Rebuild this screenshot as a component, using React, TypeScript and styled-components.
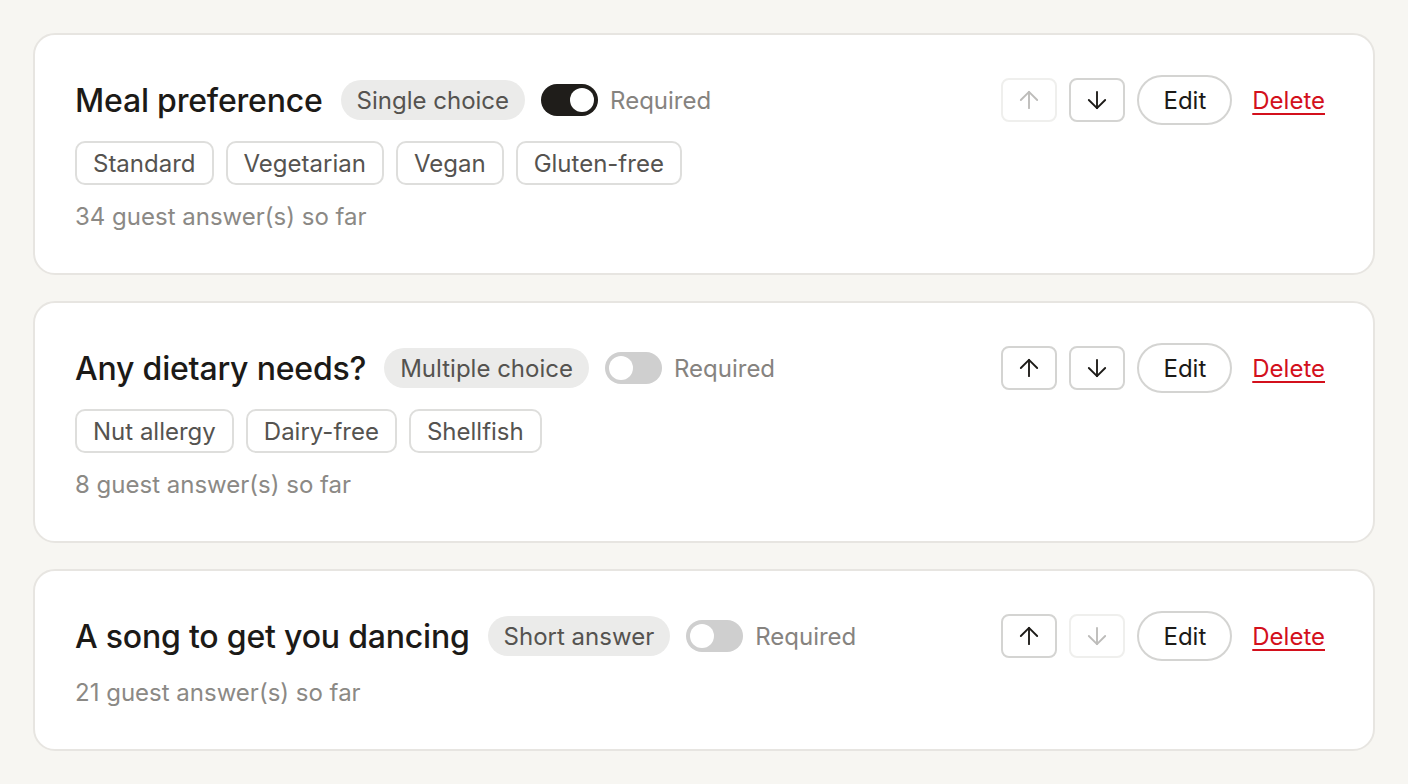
import React from "react";
import styled, { createGlobalStyle } from "styled-components";
import { ArrowUp, ArrowDown } from "lucide-react";

const Global = createGlobalStyle`
  * { box-sizing: border-box; }
  html, body { margin: 0; padding: 0; background: #f7f6f2; }
  body { font-family: Inter, "Noto Sans", sans-serif; color: #1c1a17; }
`;

const Page = styled.main`
  padding: 33px;
  display: flex;
  flex-direction: column;
  gap: 26px;
`;

const Card = styled.section`
  background: #ffffff;
  border: 2px solid #e7e5e1;
  border-radius: 22px;
  padding: 40px;
  display: flex;
  flex-direction: column;
  gap: 16px;
`;

const Header = styled.div`
  display: flex;
  align-items: center;
  justify-content: space-between;
  height: 50px;
`;

const TitleGroup = styled.div`
  display: flex;
  align-items: center;
  gap: 16px;
`;

const Title = styled.h2`
  margin: 0 2px 0 0;
  font-size: 32px;
  font-weight: 500;
  letter-spacing: -0.2px;
  color: #1c1a17;
`;

const TypeBadge = styled.span`
  display: inline-flex;
  align-items: center;
  height: 40px;
  padding: 0 16px;
  border-radius: 20px;
  background: #ebebea;
  color: #555350;
  font-size: 24px;
`;

const ToggleWrap = styled.label`
  display: flex;
  align-items: center;
  gap: 12px;
  color: #86837f;
  font-size: 24px;
`;

const Track = styled.span<{ $on: boolean }>`
  position: relative;
  width: 57px;
  height: 32px;
  border-radius: 16px;
  background: ${(p) => (p.$on ? "#1f1d1a" : "#cfcfcf")};
`;

const Knob = styled.span<{ $on: boolean }>`
  position: absolute;
  top: 4px;
  left: ${(p) => (p.$on ? "29px" : "4px")};
  width: 24px;
  height: 24px;
  border-radius: 50%;
  background: #ffffff;
`;

const Actions = styled.div`
  display: flex;
  align-items: center;
  gap: 12px;
`;

const ArrowButton = styled.button`
  width: 56px;
  height: 44px;
  border-radius: 8px;
  border: 2px solid #d4d4d2;
  background: #ffffff;
  color: #1c1a17;
  display: flex;
  align-items: center;
  justify-content: center;
  padding: 0;
  &:disabled {
    border-color: #efefed;
    color: #bdbcba;
  }
`;

const EditButton = styled.button`
  height: 50px;
  padding: 0 24px;
  border-radius: 25px;
  border: 2px solid #d4d4d2;
  background: #ffffff;
  color: #1c1a17;
  font-family: inherit;
  font-size: 24px;
`;

const DeleteButton = styled.button`
  background: none;
  border: none;
  padding: 0 8px;
  color: #d3101c;
  font-family: inherit;
  font-size: 24px;
  text-decoration: underline;
  text-underline-offset: 4px;
  text-decoration-thickness: 2px;
`;

const Options = styled.div`
  display: flex;
  gap: 12px;
`;

const Option = styled.span`
  display: inline-flex;
  align-items: center;
  height: 44px;
  padding: 0 16px;
  border: 2px solid #dededc;
  border-radius: 10px;
  color: #555350;
  font-size: 24px;
`;

const Meta = styled.p`
  margin: 0;
  font-size: 24px;
  line-height: 32px;
  color: #8b8985;
`;

type Q = {
  title: string;
  type: string;
  required: boolean;
  options: string[];
  answers: number;
  upDisabled?: boolean;
  downDisabled?: boolean;
};

const questions: Q[] = [
  { title: "Meal preference", type: "Single choice", required: true, options: ["Standard", "Vegetarian", "Vegan", "Gluten-free"], answers: 34, upDisabled: true },
  { title: "Any dietary needs?", type: "Multiple choice", required: false, options: ["Nut allergy", "Dairy-free", "Shellfish"], answers: 8 },
  { title: "A song to get you dancing", type: "Short answer", required: false, options: [], answers: 21, downDisabled: true },
];

export default function App() {
  return (
    <>
      <Global />
      <Page>
        {questions.map((q) => (
          <Card key={q.title}>
            <Header>
              <TitleGroup>
                <Title>{q.title}</Title>
                <TypeBadge>{q.type}</TypeBadge>
                <ToggleWrap>
                  <Track $on={q.required}>
                    <Knob $on={q.required} />
                  </Track>
                  Required
                </ToggleWrap>
              </TitleGroup>
              <Actions>
                <ArrowButton disabled={q.upDisabled}>
                  <ArrowUp size={28} strokeWidth={1.6} />
                </ArrowButton>
                <ArrowButton disabled={q.downDisabled}>
                  <ArrowDown size={28} strokeWidth={1.6} />
                </ArrowButton>
                <EditButton>Edit</EditButton>
                <DeleteButton>Delete</DeleteButton>
              </Actions>
            </Header>
            {q.options.length > 0 && (
              <Options>
                {q.options.map((o) => (
                  <Option key={o}>{o}</Option>
                ))}
              </Options>
            )}
            <Meta>{q.answers} guest answer(s) so far</Meta>
          </Card>
        ))}
      </Page>
    </>
  );
}
